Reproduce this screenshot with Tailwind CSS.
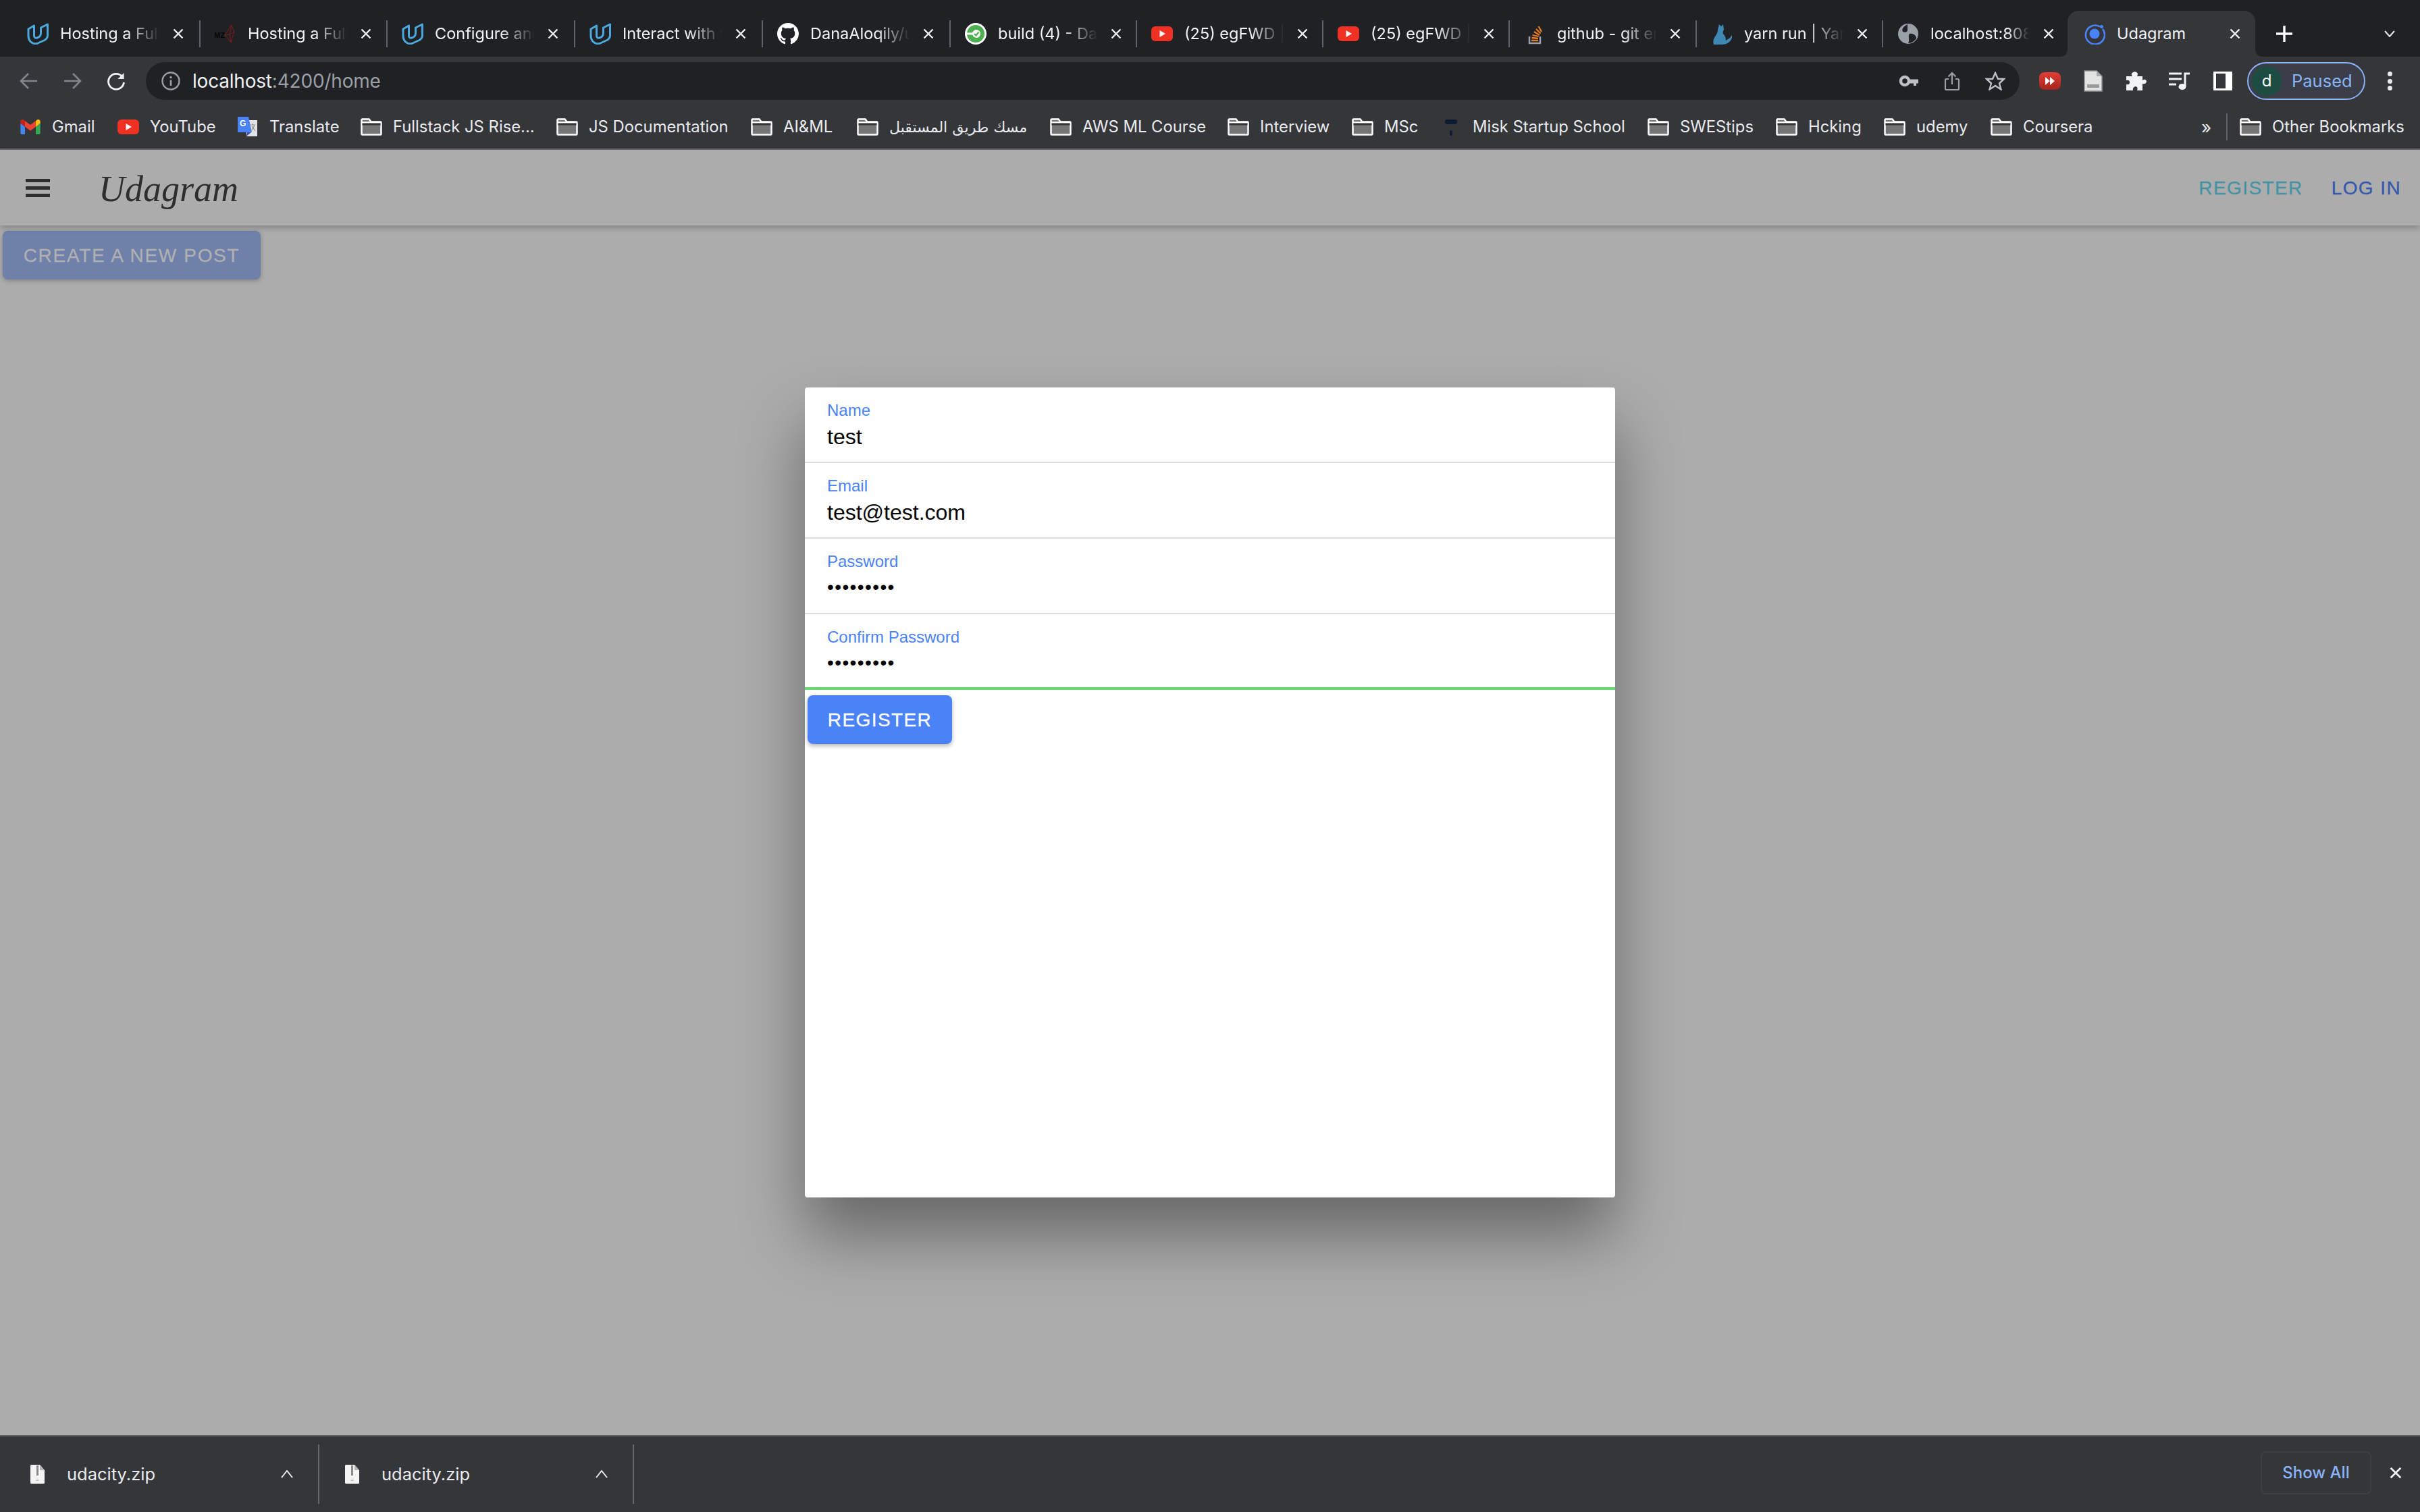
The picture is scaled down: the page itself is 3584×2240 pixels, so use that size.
<!DOCTYPE html>
<html lang="en">
<head>
<meta charset="UTF-8" />
<title>Udagram</title>
<script src="https://cdn.jsdelivr.net/npm/@tailwindcss/browser@4"></script>
</head>
<body class="bg-[#acacac] font-['Liberation_Sans',sans-serif]">
<svg class="hidden">
  <symbol id="udacity" viewBox="0 0 32 32"><path fill="none" stroke="#4aa8dc" stroke-width="3" stroke-linejoin="round" d="M2 9 10.5 4V19Q10.5 23 15 22 20.5 20.5 20.5 15V7L30.5 2V18Q30.5 23 26 25.5L15 30.5Q9 31.5 5 27.5 2 24 2 19Z"/></symbol>
  <symbol id="yt" viewBox="0 0 32 22"><rect width="32" height="22" rx="6" fill="#ef3124"/><path d="M12.5 6 21 11 12.5 16Z" fill="#fff"/></symbol>
  <symbol id="folder" viewBox="0 0 32 26"><path d="M1.5 2.5a1 1 0 0 1 1-1h10l3 4h14a1 1 0 0 1 1 1v17a1 1 0 0 1-1 1h-27a1 1 0 0 1-1-1Z" fill="#757575" stroke="#fff" stroke-width="2.5"/><path d="M1.5 6.5h29" stroke="#fff" stroke-width="2.5"/><path d="M2.5 7.5h27v3h-27z" fill="#35363a"/></symbol>
  <symbol id="close" viewBox="0 0 16 16"><path d="M1.5 1.5 14.5 14.5M14.5 1.5 1.5 14.5" fill="none" stroke="#f1f3f4" stroke-width="2.4"/></symbol>
  <symbol id="zip" viewBox="0 0 21 28"><path d="M1.5 0H14L21 8V26.5a1.5 1.5 0 0 1-1.5 1.5H1.5A1.5 1.5 0 0 1 0 26.5V1.5A1.5 1.5 0 0 1 1.5 0Z" fill="#f4f4f4"/><path d="M14 0V8H21Z" fill="#b5b5b5"/><rect x="9" y="1" width="3" height="15" fill="#8a8a8a"/><rect x="8.5" y="22" width="4" height="2" fill="#bdbdbd"/></symbol>
</svg>
<div class="flex h-[2240px] w-[3584px] flex-col overflow-hidden">

  <!-- tab strip -->
  <div class="flex h-[84px] items-end bg-[#202124] pl-[19px] font-['Inter',sans-serif] text-[23.5px] text-[#f1f3f4]">
    <div class="flex h-[68px] w-[278px] items-center pl-[21px]">
      <svg class="h-8 w-8 shrink-0"><use href="#udacity"/></svg>
      <span class="ml-[17px] w-[151px] overflow-hidden whitespace-nowrap [mask-image:linear-gradient(to_right,black_65%,transparent_98%)]">Hosting a Full Stack</span>
      <svg class="ml-[16px] h-4 w-4 shrink-0"><use href="#close"/></svg>
      <span class="ml-auto h-10 w-[2px] bg-[#5f6368]"></span>
    </div>
    <div class="flex h-[68px] w-[277px] items-center pl-[21px]">
      <svg class="h-8 w-8 shrink-0" viewBox="0 0 32 32"><text x="-1" y="22" font-family="Liberation Sans" font-weight="700" font-size="11" fill="#050505">MZ</text><path d="M15 18 25 3 29 13 24 29 19 22ZM25 3 22 17 24 29M15 18 22 17 29 13" fill="none" stroke="#7c1d18" stroke-width="1"/></svg>
      <span class="ml-[17px] w-[151px] overflow-hidden whitespace-nowrap [mask-image:linear-gradient(to_right,black_65%,transparent_98%)]">Hosting a Full Stack</span>
      <svg class="ml-[16px] h-4 w-4 shrink-0"><use href="#close"/></svg>
      <span class="ml-auto h-10 w-[2px] bg-[#5f6368]"></span>
    </div>
    <div class="flex h-[68px] w-[278px] items-center pl-[21px]">
      <svg class="h-8 w-8 shrink-0"><use href="#udacity"/></svg>
      <span class="ml-[17px] w-[151px] overflow-hidden whitespace-nowrap [mask-image:linear-gradient(to_right,black_65%,transparent_98%)]">Configure and deploy</span>
      <svg class="ml-[16px] h-4 w-4 shrink-0"><use href="#close"/></svg>
      <span class="ml-auto h-10 w-[2px] bg-[#5f6368]"></span>
    </div>
    <div class="flex h-[68px] w-[278px] items-center pl-[21px]">
      <svg class="h-8 w-8 shrink-0"><use href="#udacity"/></svg>
      <span class="ml-[17px] w-[151px] overflow-hidden whitespace-nowrap [mask-image:linear-gradient(to_right,black_65%,transparent_98%)]">Interact with the</span>
      <svg class="ml-[16px] h-4 w-4 shrink-0"><use href="#close"/></svg>
      <span class="ml-auto h-10 w-[2px] bg-[#5f6368]"></span>
    </div>
    <div class="flex h-[68px] w-[278px] items-center pl-[21px]">
      <svg class="h-8 w-8 shrink-0" viewBox="0 0 16 16"><path fill="#fff" d="M8 0C3.58 0 0 3.58 0 8c0 3.54 2.29 6.53 5.47 7.59.4.07.55-.17.55-.38 0-.19-.01-.82-.01-1.49-2.01.37-2.53-.49-2.69-.94-.09-.23-.48-.94-.82-1.13-.28-.15-.68-.52-.01-.53.63-.01 1.08.58 1.23.82.72 1.21 1.87.87 2.33.66.07-.52.28-.87.51-1.07-1.78-.2-3.64-.89-3.64-3.95 0-.87.31-1.59.82-2.15-.08-.2-.36-1.02.08-2.12 0 0 .67-.21 2.2.82.64-.18 1.32-.27 2-.27.68 0 1.36.09 2 .27 1.53-1.04 2.2-.82 2.2-.82.44 1.1.16 1.92.08 2.12.51.56.82 1.27.82 2.15 0 3.07-1.87 3.75-3.65 3.95.29.25.54.73.54 1.48 0 1.07-.01 1.93-.01 2.2 0 .21.15.46.55.38A8.013 8.013 0 0016 8c0-4.42-3.58-8-8-8z"/></svg>
      <span class="ml-[17px] w-[151px] overflow-hidden whitespace-nowrap [mask-image:linear-gradient(to_right,black_65%,transparent_98%)]">DanaAloqily/udacity</span>
      <svg class="ml-[16px] h-4 w-4 shrink-0"><use href="#close"/></svg>
      <span class="ml-auto h-10 w-[2px] bg-[#5f6368]"></span>
    </div>
    <div class="flex h-[68px] w-[276px] items-center pl-[21px]">
      <svg class="h-8 w-8 shrink-0" viewBox="0 0 32 32"><circle cx="16" cy="16" r="16" fill="#fff"/><circle cx="16" cy="16" r="13" fill="#4caf50"/><path d="M3 16H12" stroke="#fff" stroke-width="3"/><circle cx="17" cy="16" r="6" fill="#fff"/><path d="M14 16 16.5 18.5 20.5 13.5" fill="none" stroke="#4caf50" stroke-width="2.2"/></svg>
      <span class="ml-[17px] w-[151px] overflow-hidden whitespace-nowrap [mask-image:linear-gradient(to_right,black_65%,transparent_98%)]">build (4) - Dashboard</span>
      <svg class="ml-[16px] h-4 w-4 shrink-0"><use href="#close"/></svg>
      <span class="ml-auto h-10 w-[2px] bg-[#5f6368]"></span>
    </div>
    <div class="flex h-[68px] w-[276px] items-center pl-[21px]">
      <svg class="h-8 w-8 shrink-0"><use href="#yt"/></svg>
      <span class="ml-[17px] w-[151px] overflow-hidden whitespace-nowrap [mask-image:linear-gradient(to_right,black_65%,transparent_98%)]">(25) egFWD | Udacity</span>
      <svg class="ml-[16px] h-4 w-4 shrink-0"><use href="#close"/></svg>
      <span class="ml-auto h-10 w-[2px] bg-[#5f6368]"></span>
    </div>
    <div class="flex h-[68px] w-[276px] items-center pl-[21px]">
      <svg class="h-8 w-8 shrink-0"><use href="#yt"/></svg>
      <span class="ml-[17px] w-[151px] overflow-hidden whitespace-nowrap [mask-image:linear-gradient(to_right,black_65%,transparent_98%)]">(25) egFWD | Udacity</span>
      <svg class="ml-[16px] h-4 w-4 shrink-0"><use href="#close"/></svg>
      <span class="ml-auto h-10 w-[2px] bg-[#5f6368]"></span>
    </div>
    <div class="flex h-[68px] w-[277px] items-center pl-[21px]">
      <svg class="h-8 w-8 shrink-0" viewBox="0 0 32 32"><path d="M8 20V30H24V20" fill="none" stroke="#9aa0a6" stroke-width="2.5"/><path d="M11 26H21M11.5 22 21 23M12.5 18 21.5 20M15 13 23 18M18 9 24.5 15.5M21.5 5 26 13" stroke="#e87b22" stroke-width="2.3"/></svg>
      <span class="ml-[17px] w-[151px] overflow-hidden whitespace-nowrap [mask-image:linear-gradient(to_right,black_65%,transparent_98%)]">github - git error</span>
      <svg class="ml-[16px] h-4 w-4 shrink-0"><use href="#close"/></svg>
      <span class="ml-auto h-10 w-[2px] bg-[#5f6368]"></span>
    </div>
    <div class="flex h-[68px] w-[276px] items-center pl-[21px]">
      <svg class="h-8 w-8 shrink-0" viewBox="0 0 32 32"><path d="M12 2 15 5 18 2 19 10Q17 13 18 16 22 20 22 26L28 22 31 18Q32 24 26 29 22 32 16 32H4Q2 26 6 20 10 15 10 10Z" fill="#3e88b3"/></svg>
      <span class="ml-[17px] w-[151px] overflow-hidden whitespace-nowrap [mask-image:linear-gradient(to_right,black_65%,transparent_98%)]">yarn run | Yarn</span>
      <svg class="ml-[16px] h-4 w-4 shrink-0"><use href="#close"/></svg>
      <span class="ml-auto h-10 w-[2px] bg-[#5f6368]"></span>
    </div>
    <div class="flex h-[68px] w-[273px] items-center pl-[21px]">
      <svg class="h-8 w-8 shrink-0" viewBox="0 0 32 32"><circle cx="16" cy="16" r="15" fill="#9aa0a6"/><path d="M15 2C9 5 6 9 8 13 12 15 16 13 15 8ZM18 16C23 15 28 18 28 23 25 27 21 30 16 30 19 26 15 20 18 16Z" fill="#202124"/></svg>
      <span class="ml-[17px] w-[151px] overflow-hidden whitespace-nowrap [mask-image:linear-gradient(to_right,black_75%,transparent_97%)]">localhost:8080</span>
      <svg class="ml-[16px] h-4 w-4 shrink-0"><use href="#close"/></svg>
    </div>
    <!-- active tab -->
    <div class="relative flex h-[68px] w-[278px] items-center rounded-t-[16px] bg-[#35363a] pl-[24px]">
      <svg class="absolute -left-[12px] bottom-0 h-3 w-3" viewBox="0 0 12 12"><path d="M12 0V12H0Q12 12 12 0Z" fill="#35363a"/></svg>
      <svg class="absolute -right-[12px] bottom-0 h-3 w-3" viewBox="0 0 12 12"><path d="M0 0V12H12Q0 12 0 0Z" fill="#35363a"/></svg>
      <svg class="h-8 w-8 shrink-0" viewBox="0 0 32 32"><path d="M24 5.5A14 14 0 1 0 28 9" fill="none" stroke="#4a82f7" stroke-width="2.6"/><circle cx="16" cy="16" r="7.5" fill="#4a82f7"/><circle cx="26.5" cy="5.5" r="2.5" fill="#4a82f7"/></svg>
      <span class="ml-[17px] w-[151px] overflow-hidden whitespace-nowrap">Udagram</span>
      <svg class="ml-[16px] h-4 w-4 shrink-0"><use href="#close"/></svg>
    </div>
    <svg class="mb-[22px] ml-[31px] h-[24px] w-[24px]" viewBox="0 0 24 24"><path d="M12 0V24M0 12H24" stroke="#fff" stroke-width="3.4"/></svg>
    <svg class="mb-[29px] ml-[136px] h-[10px] w-[16px]" viewBox="0 0 16 10"><path d="M1 1 8 9 15 1" fill="none" stroke="#e8eaed" stroke-width="2"/></svg>
  </div>

  <!-- address bar -->
  <div class="flex h-[72px] items-center bg-[#35363a] pl-[11px] font-['Inter',sans-serif]">
    <div class="flex h-8 w-16 items-center justify-center"><svg class="h-7 w-7" viewBox="0 0 28 28"><path d="M26 14H3M13 3 2 14 13 25" fill="none" stroke="#80868b" stroke-width="2.6"/></svg></div>
    <div class="flex h-8 w-16 items-center justify-center"><svg class="h-7 w-7" viewBox="0 0 28 28"><path d="M2 14H25M15 3 26 14 15 25" fill="none" stroke="#80868b" stroke-width="2.6"/></svg></div>
    <div class="flex h-8 w-16 items-center justify-center"><svg class="ml-[2px] h-7 w-7" viewBox="0 0 28 28"><path d="M24 9A11.5 11.5 0 1 0 25.5 16" fill="none" stroke="#f1f3f4" stroke-width="2.8"/><path d="M25.5 2V11H16.5Z" fill="#f1f3f4"/></svg></div>
    <div class="ml-[13px] flex h-[56px] w-[2775px] items-center rounded-full bg-[#202124] pl-[23px] pr-[4px]">
      <svg class="h-[28px] w-[28px]" viewBox="0 0 28 28"><circle cx="14" cy="14" r="12.5" fill="none" stroke="#9aa0a6" stroke-width="2.4"/><path d="M14 12.5V21" stroke="#9aa0a6" stroke-width="2.6"/><circle cx="14" cy="8.5" r="1.7" fill="#9aa0a6"/></svg>
      <span class="ml-[18px] text-[28px] tracking-[-0.2px] text-[#f1f3f4]">localhost<span class="text-[#9aa0a6]">:4200/home</span></span>
      <div class="ml-auto flex h-8 w-16 items-center justify-center"><svg class="h-[18px] w-[28px]" viewBox="0 0 28 18"><circle cx="8" cy="9" r="6" fill="none" stroke="#bdc1c6" stroke-width="4.5"/><path d="M13 6.5H28V12.5H25V16H21V12.5H13Z" fill="#bdc1c6"/></svg></div>
      <div class="flex h-8 w-16 items-center justify-center"><svg class="h-[28px] w-[24px]" viewBox="0 0 24 28"><path d="M7 11H3.5A1.5 1.5 0 0 0 2 12.5V25.5A1.5 1.5 0 0 0 3.5 27H20.5A1.5 1.5 0 0 0 22 25.5V12.5A1.5 1.5 0 0 0 20.5 11H17M12 19V2M6.5 7.5 12 2 17.5 7.5" fill="none" stroke="#9aa0a6" stroke-width="2.2"/></svg></div>
      <div class="flex h-8 w-16 items-center justify-center"><svg class="h-[28px] w-[30px]" viewBox="0 0 30 28"><path d="M15 2 19 11H28L21 17.5 23.5 26.5 15 21 6.5 26.5 9 17.5 2 11H11Z" fill="none" stroke="#bdc1c6" stroke-width="2.4"/></svg></div>
    </div>
    <div class="ml-[13px] flex h-8 w-16 items-center justify-center"><svg class="h-[26px] w-8" viewBox="0 0 32 26"><defs><linearGradient id="redext" x1="0" y1="0" x2="0" y2="1"><stop offset="0" stop-color="#e23d36"/><stop offset="1" stop-color="#a5261d"/></linearGradient></defs><rect width="32" height="26" rx="8" fill="url(#redext)"/><path d="M9 7 16 13 9 19ZM16 7 23 13 16 19Z" fill="#fff"/></svg></div>
    <div class="flex h-8 w-16 items-center justify-center"><svg class="h-8 w-[28px]" viewBox="0 0 28 32"><path d="M1 1H19L27 9V31H1Z" fill="#e3e3e3" stroke="#8e8e8e" stroke-width="1.5"/><path d="M19 1V9H27Z" fill="#a8a8a8"/><rect x="5" y="21" width="18" height="5" fill="#9a9a9a"/></svg></div>
    <div class="flex h-8 w-16 items-center justify-center"><svg class="h-[28px] w-[30px]" viewBox="0 0 30 28"><path d="M0 7H9Q6 3 10 1 15 -1 17 3 17 5 16 7H24V13Q28 10 30 14 30 19 24 18V28H16Q18 23 14 22 9 23 10 28H0V19Q5 20 5 16 5 12 0 13Z" fill="#f1f3f4"/></svg></div>
    <div class="flex h-8 w-16 items-center justify-center"><svg class="h-[26px] w-8" viewBox="0 0 32 26"><path d="M0 2H19M0 10H19M0 18H11" stroke="#f1f3f4" stroke-width="3"/><path d="M24 21V2H31" fill="none" stroke="#f1f3f4" stroke-width="3"/><ellipse cx="20" cy="21.5" rx="5.5" ry="4.5" fill="#f1f3f4"/></svg></div>
    <div class="flex h-8 w-16 items-center justify-center"><div class="h-[28px] w-[28px] border-y-[3px] border-l-[4px] border-r-[10px] border-white bg-[#35363a]"></div></div>
    <div class="ml-[4px] flex h-[56px] w-[175px] items-center rounded-full border-2 border-[#8ab4f8] bg-[#3b3e48] pl-[5px]">
      <div class="flex h-[44px] w-[44px] items-center justify-center rounded-full bg-[#1d4d42] text-[24px] text-white">d</div>
      <span class="ml-[15px] text-[25.5px] text-[#8ab4f8]">Paused</span>
    </div>
    <div class="flex w-[72px] flex-col items-center gap-[3.5px]">
      <span class="h-[7px] w-[7px] rounded-full bg-[#e8eaed]"></span>
      <span class="h-[7px] w-[7px] rounded-full bg-[#e8eaed]"></span>
      <span class="h-[7px] w-[7px] rounded-full bg-[#e8eaed]"></span>
    </div>
  </div>

  <!-- bookmarks -->
  <div class="flex h-[66px] items-center border-b-2 border-[#66666b] bg-[#35363a] pl-[29px] font-['Inter',sans-serif] text-[23.8px] whitespace-nowrap text-[#e8eaed]">
    <div class="flex w-[145px] items-center gap-4"><svg class="h-[22px] w-8" viewBox="52 42 88 66"><path fill="#4285f4" d="M58 108h14V74L52 59v43c0 3.32 2.69 6 6 6"/><path fill="#34a853" d="M120 108h14c3.32 0 6-2.69 6-6V59l-20 15"/><path fill="#fbbc04" d="M120 48v26l20-15v-8c0-7.42-8.47-11.65-14.4-7.2"/><path fill="#ea4335" d="M72 74V48l24 18 24-18v26L96 92"/><path fill="#c5221f" d="M52 51v8l20 15V48l-5.6-4.2c-5.94-4.45-14.4-.22-14.4 7.2"/></svg>Gmail</div>
    <div class="flex w-[177px] items-center gap-4"><svg class="h-[22px] w-8"><use href="#yt"/></svg>YouTube</div>
    <div class="flex w-[183px] items-center gap-4"><svg class="h-[32px] w-8" viewBox="0 0 32 32"><path d="M13 6H30V30H14Z" fill="#e3e3e3"/><path d="M15 24 14 30 21 24Z" fill="#3f51b5"/><path d="M1 1H17L22 24H1Z" fill="#4a82f7"/><text x="4" y="15" font-family="Liberation Sans" font-weight="700" font-size="12" fill="#fff">G</text><path d="M20 13H27M23.5 11V13M21 22 26 14M22 15 27 22" fill="none" stroke="#8a8a8a" stroke-width="1.2"/></svg>Translate</div>
    <div class="flex w-[290px] items-center gap-4"><svg class="h-[26px] w-8"><use href="#folder"/></svg>Fullstack JS Rise...</div>
    <div class="flex w-[288px] items-center gap-4"><svg class="h-[26px] w-8"><use href="#folder"/></svg>JS Documentation</div>
    <div class="flex w-[157px] items-center gap-4"><svg class="h-[26px] w-8"><use href="#folder"/></svg>AI&amp;ML</div>
    <div class="flex w-[286px] items-center gap-4"><svg class="h-[26px] w-8"><use href="#folder"/></svg><span class="font-['DejaVu_Sans',sans-serif] text-[22px]" dir="rtl">مسك طريق المستقبل</span></div>
    <div class="flex w-[263px] items-center gap-4"><svg class="h-[26px] w-8"><use href="#folder"/></svg>AWS ML Course</div>
    <div class="flex w-[184px] items-center gap-4"><svg class="h-[26px] w-8"><use href="#folder"/></svg>Interview</div>
    <div class="flex w-[131px] items-center gap-4"><svg class="h-[26px] w-8"><use href="#folder"/></svg>MSc</div>
    <div class="flex w-[307px] items-center gap-4"><svg class="h-[26px] w-8" viewBox="0 0 32 26"><rect x="7" y="2" width="18" height="7" rx="3" fill="#0f1b33"/><rect x="14" y="18" width="4" height="8" rx="2" fill="#0f1b33"/></svg>Misk Startup School</div>
    <div class="flex w-[190px] items-center gap-4"><svg class="h-[26px] w-8"><use href="#folder"/></svg>SWEStips</div>
    <div class="flex w-[160px] items-center gap-4"><svg class="h-[26px] w-8"><use href="#folder"/></svg>Hcking</div>
    <div class="flex w-[158px] items-center gap-4"><svg class="h-[26px] w-8"><use href="#folder"/></svg>udemy</div>
    <div class="flex w-[310px] items-center gap-4"><svg class="h-[26px] w-8"><use href="#folder"/></svg>Coursera</div>
    <span class="w-[19px] text-center text-[26px]">»</span>
    <span class="ml-[20px] h-10 w-[2px] bg-[#5f6368]"></span>
    <div class="ml-[18px] flex items-center gap-4"><svg class="h-[26px] w-8"><use href="#folder"/></svg>Other Bookmarks</div>
  </div>

  <!-- page -->
  <div class="relative flex-1">
    <header class="relative flex h-[112px] items-center pl-[38px] pr-[28px] shadow-[0_4px_8px_rgba(0,0,0,0.22)]">
      <div class="flex w-9 flex-col gap-[6px]">
        <span class="h-[5px] bg-[#2e2e2e]"></span>
        <span class="h-[5px] bg-[#2e2e2e]"></span>
        <span class="h-[5px] bg-[#2e2e2e]"></span>
      </div>
      <span class="ml-[72px] pt-[4px] font-['Liberation_Serif',serif] text-[54px] italic text-[#2e2e2e]">Udagram</span>
      <div class="ml-auto flex gap-[42px] pt-[2px] text-[28px] tracking-[0.05em] [-webkit-text-stroke:0.3px]">
        <span class="text-[#4494a6]">REGISTER</span>
        <span class="text-[#3458ae]">LOG IN</span>
      </div>
    </header>
    <button class="ml-1 mt-2 h-[72px] w-[382px] rounded-lg bg-[#6f80aa] pt-[2px] text-[28px] tracking-[0.06em] text-[#b0b0b0] shadow-[0_2px_6px_rgba(0,0,0,0.25)] [-webkit-text-stroke:0.3px]">CREATE A NEW POST</button>

    <!-- register modal -->
    <div class="absolute inset-0 flex items-center justify-center">
      <div class="h-[1200px] w-[1200px] rounded bg-white shadow-[0_56px_96px_rgba(0,0,0,0.4)]">
        <div class="h-[112px] border-b-2 border-[#dedede] pl-[33px] pt-5">
          <div class="text-[24px] leading-[28px] text-[#4a82f7]">Name</div>
          <div class="mt-[5px] text-[32px] leading-[40px] text-black">test</div>
        </div>
        <div class="h-[112px] border-b-2 border-[#dedede] pl-[33px] pt-5">
          <div class="text-[24px] leading-[28px] text-[#4a82f7]">Email</div>
          <div class="mt-[5px] text-[32px] leading-[40px] text-black">test@test.com</div>
        </div>
        <div class="h-[112px] border-b-2 border-[#dedede] pl-[33px] pt-5">
          <div class="text-[24px] leading-[28px] text-[#4a82f7]">Password</div>
          <div class="mt-[4px] text-[28px] leading-[40px] tracking-[1.4px] text-black">•••••••••</div>
        </div>
        <div class="h-[112px] border-b-4 border-[#65d874] pl-[33px] pt-5">
          <div class="text-[24px] leading-[28px] text-[#4a82f7]">Confirm Password</div>
          <div class="mt-[4px] text-[28px] leading-[40px] tracking-[1.4px] text-black">•••••••••</div>
        </div>
        <button class="ml-1 mt-2 h-[72px] w-[214px] rounded-lg bg-[#4a82f7] pt-[2px] text-[28px] tracking-[0.05em] text-white shadow-[0_3px_6px_rgba(0,0,0,0.3)] [-webkit-text-stroke:0.3px]">REGISTER</button>
      </div>
    </div>
  </div>

  <!-- downloads shelf -->
  <div class="flex h-[114px] items-center border-t-2 border-[#66666b] bg-[#35363a] pl-[7px] font-['Inter',sans-serif] text-[25.5px] text-[#e8eaed]">
    <div class="flex h-[88px] w-[466px] items-center border-r-2 border-[#66686c] pl-[38px]">
      <svg class="h-7 w-[21px]"><use href="#zip"/></svg>
      <span class="ml-[33px]">udacity.zip</span>
      <svg class="ml-auto mr-[37px] h-[12px] w-[18px]" viewBox="0 0 18 12"><path d="M1 11 9 1 17 11" fill="none" stroke="#e8eaed" stroke-width="2"/></svg>
    </div>
    <div class="flex h-[88px] w-[466px] items-center border-r-2 border-[#66686c] pl-[38px]">
      <svg class="h-7 w-[21px]"><use href="#zip"/></svg>
      <span class="ml-[33px]">udacity.zip</span>
      <svg class="ml-auto mr-[37px] h-[12px] w-[18px]" viewBox="0 0 18 12"><path d="M1 11 9 1 17 11" fill="none" stroke="#e8eaed" stroke-width="2"/></svg>
    </div>
    <div class="mb-[4px] ml-auto flex h-16 w-[164px] items-center justify-center rounded-lg border-2 border-[#3e3f43] text-[24px] font-medium text-[#8ab4f8]">Show All</div>
    <svg class="mb-[4px] ml-[27px] mr-[27px] h-[18px] w-[18px]"><use href="#close"/></svg>
  </div>
</div>
</body>
</html>
